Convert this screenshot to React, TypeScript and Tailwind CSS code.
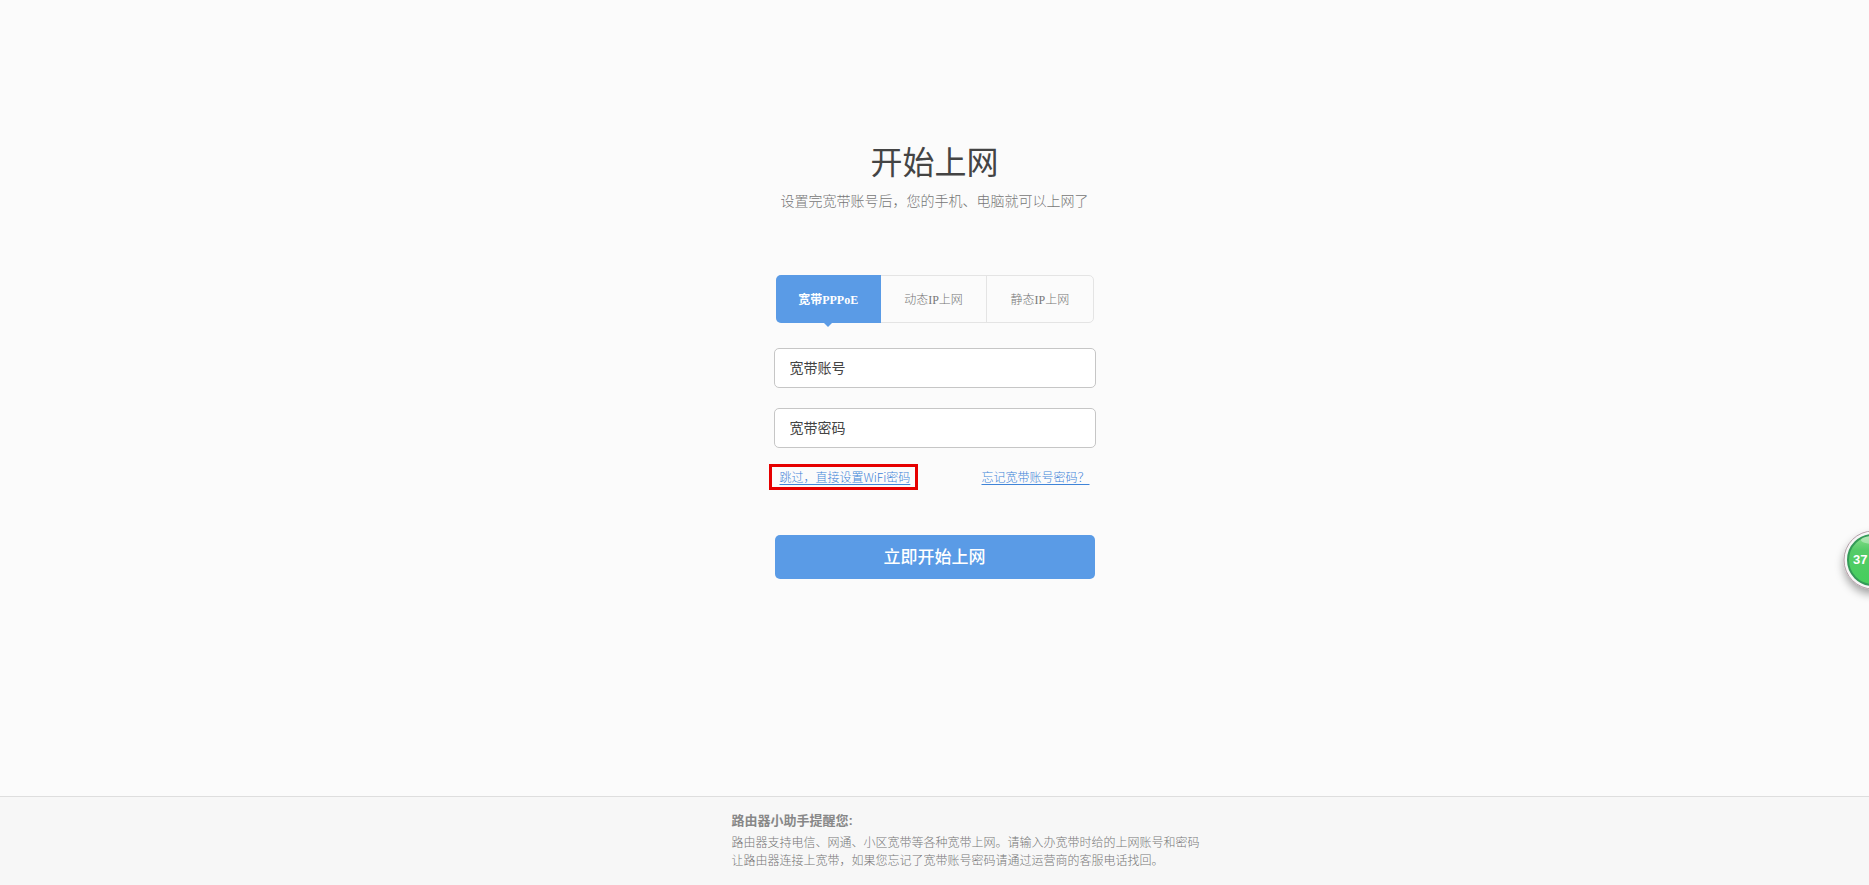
import React, { useState } from 'react';

const tabs = ['宽带PPPoE', '动态IP上网', '静态IP上网'];

const fields = [
  { id: 'account', label: '宽带账号' },
  { id: 'password', label: '宽带密码' },
];

const SpeedBall = () => (
  <button
    type="button"
    className="absolute -right-10 top-[525px] h-[76px] w-[76px]"
  >
    <svg viewBox="0 0 76 76" className="h-full w-full overflow-visible">
      <defs>
        <linearGradient id="ball" x1="0" y1="0" x2="0" y2="1">
          <stop offset="0" stopColor="#8ce08f" />
          <stop offset="0.3" stopColor="#55cb68" />
          <stop offset="1" stopColor="#45cf5c" />
        </linearGradient>
        <filter id="ballShadow" x="-30%" y="-20%" width="160%" height="160%">
          <feDropShadow dx="0" dy="5" stdDeviation="4" floodColor="#000" floodOpacity="0.35" />
        </filter>
      </defs>
      <circle cx="40" cy="35" r="29" fill="#f6f6f6" stroke="#b5a0aa" strokeWidth="1" filter="url(#ballShadow)" />
      <circle cx="40" cy="35" r="25" fill="url(#ball)" stroke="#349a58" strokeWidth="2" />
      <ellipse cx="40" cy="15" rx="12" ry="4" fill="#fff" opacity="0.35" />
      <text x="20" y="39" fill="#fff" fontSize="13" fontWeight="700" fontFamily="Liberation Sans, sans-serif">
        37
      </text>
    </svg>
  </button>
);

export default function App() {
  const [active, setActive] = useState(0);

  return (
    <div className="relative flex min-h-screen flex-col overflow-hidden bg-[#fbfbfb] font-['Liberation_Sans','Noto_Sans_CJK_SC',sans-serif]">
      <main className="mx-auto flex w-[322px] flex-col pt-[139px]">
        <h1 className="text-center text-[32px] leading-[48px] text-[#444]">开始上网</h1>
        <p className="mt-0.5 text-center text-sm leading-6 font-light whitespace-nowrap text-[#777]">
          设置完宽带账号后，您的手机、电脑就可以上网了
        </p>

        <div
          role="tablist"
          className="mx-[2px] mt-[62px] flex h-12 rounded-[5px] border border-[#e4e4e4] font-['Liberation_Serif','Noto_Sans_CJK_SC',serif] text-xs"
        >
          {tabs.map((tab, i) => (
            <button
              key={tab}
              type="button"
              role="tab"
              aria-selected={active === i}
              onClick={() => setActive(i)}
              className={
                active === i
                  ? 'relative -m-px flex-1 rounded-l-[5px] bg-[#5a9be6] pt-px font-bold text-white'
                  : 'flex-1 border-l border-[#e4e4e4] pt-px font-light text-[#777] first:border-l-0'
              }
            >
              {tab}
              {active === i && (
                <span className="absolute top-full left-1/2 h-0 w-0 -translate-x-1/2 border-x-4 border-t-4 border-x-transparent border-t-[#5a9be6]" />
              )}
            </button>
          ))}
        </div>

        <form onSubmit={(e) => e.preventDefault()}>
          <div className="mt-[25px] space-y-5">
            {fields.map((field) => (
              <input
                key={field.id}
                id={field.id}
                type="text"
                aria-label={field.label}
                placeholder={field.label}
                className="block h-10 w-full rounded-[5px] border border-[#c6c6c6] bg-white px-[15px] text-sm text-[#444] outline-none placeholder:text-[#444]"
              />
            ))}
          </div>

          <div className="mt-4 -ml-[5px] flex items-center justify-between pr-[6px] font-['Noto_Sans_CJK_SC',sans-serif] text-xs leading-5 font-light text-[#3f84d8]">
            <a href="#skip" className="border-3 border-[#e60000] pr-[5px] pl-2 underline underline-offset-2">
              跳过，直接设置WiFi密码
            </a>
            <a href="#forgot" className="underline underline-offset-2">
              忘记宽带账号密码？
            </a>
          </div>

          <button
            type="submit"
            className="mx-px mt-[45px] h-11 w-[320px] rounded-[5px] bg-[#5a9be6] pt-px text-[17px] font-medium text-white"
          >
            立即开始上网
          </button>
        </form>
      </main>

      <footer className="mt-auto h-[89px] border-t border-[#dedede] bg-[#f7f7f7] pt-[15px] text-[#888]">
        <div className="mx-auto w-[406px] text-xs leading-[18px] font-light whitespace-nowrap text-[#777]">
          <h2 className="mb-1 text-[13px] font-bold text-[#888]">路由器小助手提醒您:</h2>
          <p>路由器支持电信、网通、小区宽带等各种宽带上网。请输入办宽带时给的上网账号和密码</p>
          <p>让路由器连接上宽带，如果您忘记了宽带账号密码请通过运营商的客服电话找回。</p>
        </div>
      </footer>

      <SpeedBall />
    </div>
  );
}
